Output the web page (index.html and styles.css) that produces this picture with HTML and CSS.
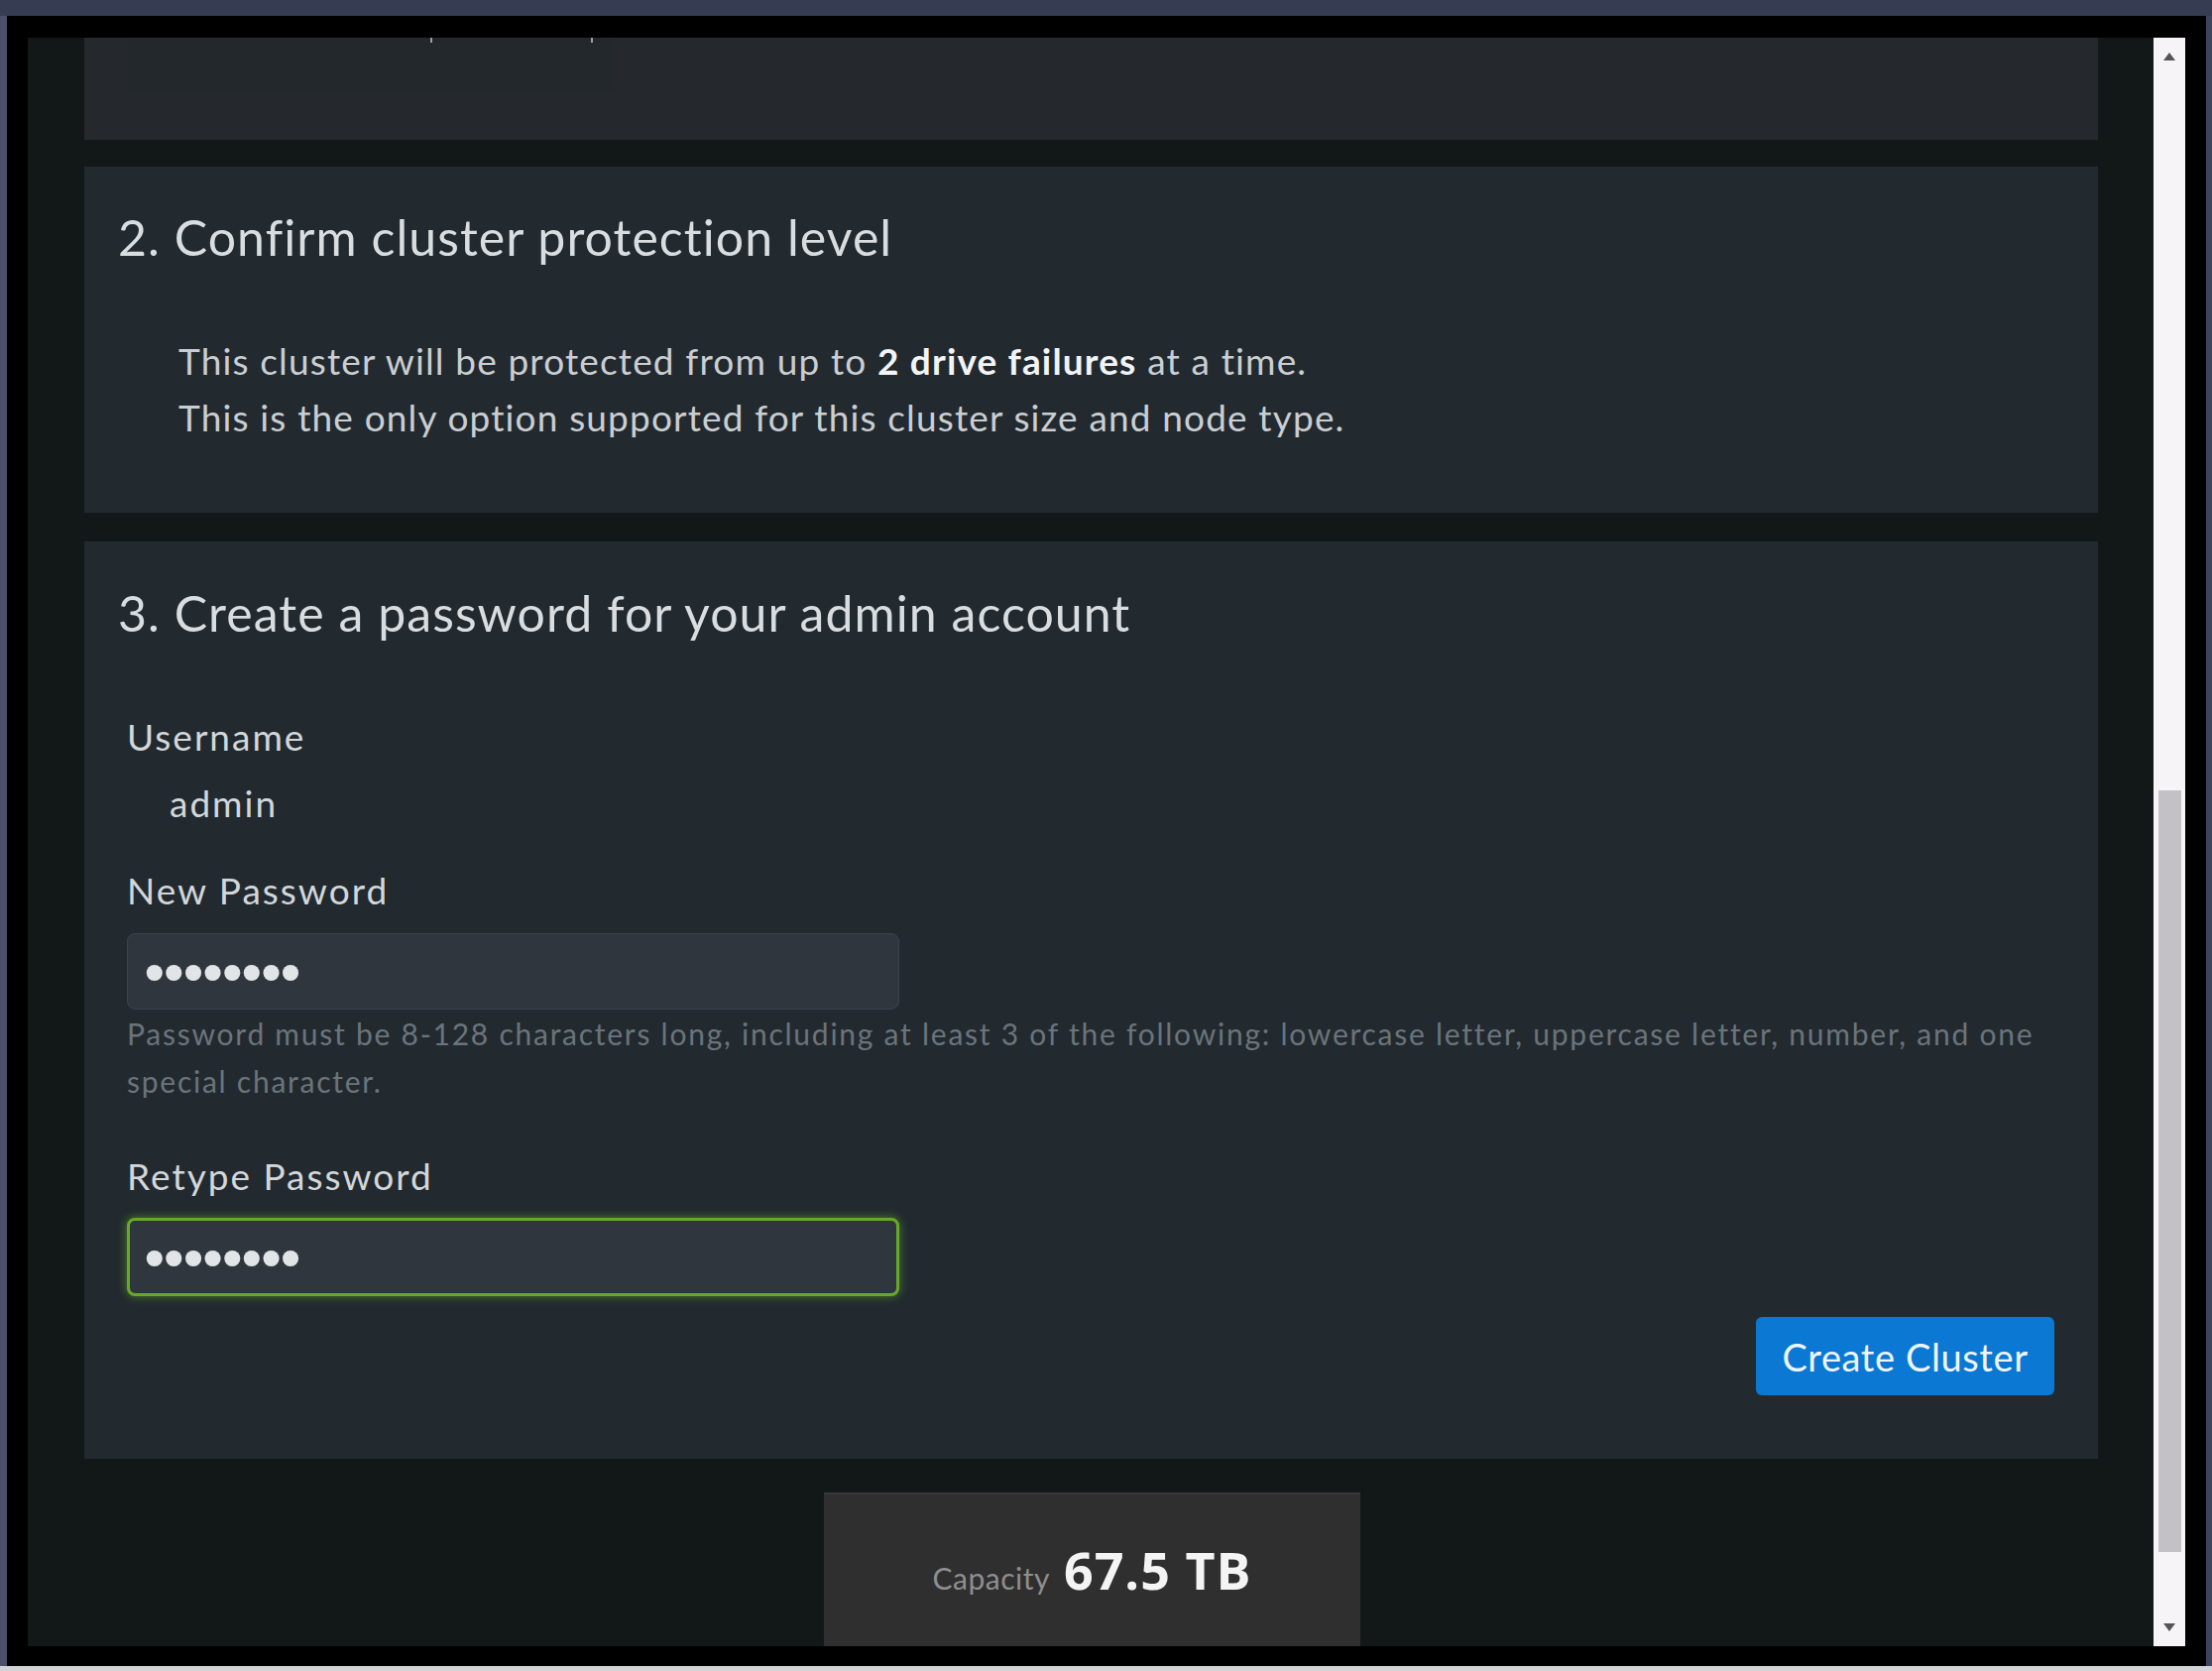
FILE: index.html
```html
<!DOCTYPE html>
<html lang="en">
<head>
<meta charset="utf-8">
<title>Create Cluster</title>
<link rel="stylesheet" href="styles.css">
</head>
<body>
<div class="screen">
  <div class="top-strip"></div>
  <div class="middle">
    <div class="side-strip left"></div>
    <div class="window">
      <div class="viewport">
        <div class="scroll-content">
          <section class="card card-partial">
            <div class="faint-field"><span class="tick t1"></span><span class="tick t2"></span></div>
          </section>
          <section class="card card-protection">
            <h2 class="card-title">2. Confirm cluster protection level</h2>
            <p class="desc">This cluster will be protected from up to <strong>2 drive failures</strong> at a time.<br>This is the only option supported for this cluster size and node type.</p>
          </section>
          <section class="card card-password">
            <h2 class="card-title">3. Create a password for your admin account</h2>
            <form class="pw-form">
              <div class="field-label first">Username</div>
              <div class="static-value">admin</div>
              <label class="field-label" for="pw1">New Password</label>
              <input class="pw-input" id="pw1" type="password" value="password">
              <div class="help">Password must be 8-128 characters long, including at least 3 of the following: lowercase letter, uppercase letter, number, and one special character.</div>
              <label class="field-label retype" for="pw2">Retype Password</label>
              <input class="pw-input valid" id="pw2" type="password" value="password">
              <div class="actions">
                <button type="button" class="btn-primary">Create Cluster</button>
              </div>
            </form>
          </section>
        </div>
        <div class="capacity">
          <span class="cap-label">Capacity</span>
          <span class="cap-value">67.5 TB</span>
        </div>
      </div>
      <div class="scrollbar">
        <div class="sb-arrow up"></div>
        <div class="sb-track"><div class="sb-thumb"></div></div>
        <div class="sb-arrow down"></div>
      </div>
    </div>
    <div class="side-strip right"></div>
  </div>
  <div class="bottom-strip"></div>
</div>
</body>
</html>
```
FILE: styles.css
```css
* { box-sizing: border-box; }
html, body { margin: 0; padding: 0; }
body {
  width: 2231px;
  height: 1685px;
  overflow: hidden;
  background: #363c52;
  font-family: Lato, "Noto Sans", sans-serif;
}
.screen {
  width: 2231px;
  height: 1685px;
  display: flex;
  flex-direction: column;
}
.top-strip { height: 16px; background: #363c52; flex: none; }
.bottom-strip { height: 5px; background: #d2d3d6; flex: none; }
.middle { display: flex; height: 1664px; flex: none; }
.side-strip { flex: none; background: #3e445b; }
.side-strip.left { width: 7px; background: #4c5269; }
.side-strip.right { width: 6px; }

.window {
  width: 2218px;
  flex: none;
  background: #000;
  padding: 22px 21px 20px 21px;
  display: flex;
}
.viewport {
  position: relative;
  width: 2144px;
  height: 1622px;
  background: #111817;
  overflow: hidden;
  flex: none;
}
.scroll-content {
  padding: 0 56px 0 57px;
  display: flex;
  flex-direction: column;
}
.card {
  background: #222a30;
  color: #d6dadd;
}
.card-partial {
  height: 103px;
  margin-bottom: 27px;
  background: #25292d;
  padding-left: 43px;
}
.faint-field {
  position: relative;
  width: 491px;
  height: 55px;
  background: #22282c;
}
.tick {
  position: absolute;
  top: 0;
  width: 2px;
  height: 5px;
  background: #9aa0a4;
}
.tick.t1 { left: 306px; }
.tick.t2 { left: 468px; }

.card-protection {
  height: 349px;
  margin-bottom: 29px;
  padding: 41px 34px 0 34px;
}
.card-title {
  margin: 0;
  font-weight: 400;
  font-size: 50px;
  line-height: 60px;
  letter-spacing: 1.05px;
  color: #d9dde0;
}
.desc {
  margin: 66px 0 0 0;
  padding-left: 61px;
  font-size: 37px;
  line-height: 57px;
  letter-spacing: 1.15px;
  color: #caced2;
}
.desc strong { color: #f2f4f5; font-weight: 700; }

.card-password {
  height: 925px;
  padding: 41.5px 44px 0 34px;
}
.pw-form {
  margin: 0 0 0 9px;
  display: flex;
  flex-direction: column;
}
.field-label {
  display: block;
  font-size: 37px;
  line-height: 42px;
  letter-spacing: 2px;
  color: #d3d7da;
  margin-top: 46px;
}
.field-label.first { margin-top: 74px; }
.field-label.retype { margin-top: 50.5px; }
.static-value {
  margin-top: 25px;
  padding-left: 43px;
  font-size: 37px;
  line-height: 42px;
  letter-spacing: 2px;
  color: #d3d7da;
}
.pw-input {
  display: block;
  width: 779px;
  height: 77px;
  margin: 22.5px 0 0 0;
  padding: 0 0 0 17px;
  background: #30363e;
  border: 1px solid #3b424a;
  border-radius: 8px;
  color: #e2e5e7;
  font-family: "Liberation Sans", sans-serif;
  font-weight: 700;
  font-size: 56px;
  letter-spacing: 0;
  outline: none;
}
.pw-input.valid {
  height: 79px;
  margin-top: 21.5px;
  padding-left: 15px;
  border: 3px solid #66a92a;
  box-shadow: 0 0 8px 1px rgba(102, 170, 40, 0.55);
}
.help {
  font-size: 30px;
  line-height: 48px;
  letter-spacing: 1.75px;
  color: #6b747a;
}
.actions {
  margin-top: 21px;
  display: flex;
  justify-content: flex-end;
}
.btn-primary {
  height: 79px;
  width: 301px;
  padding: 0;
  border: none;
  border-radius: 6px;
  background: #0b78d3;
  color: #eef6fd;
  font-family: Lato, "Noto Sans", sans-serif;
  font-size: 38px;
  letter-spacing: 0.6px;
}

.capacity {
  position: absolute;
  left: 803px;
  top: 1467px;
  width: 541px;
  height: 160px;
  background: #2f2f2f;
  border-top: 2px solid #393939;
  display: flex;
  align-items: baseline;
  justify-content: center;
  gap: 14px;
  padding-top: 40px;
}
.cap-label {
  font-size: 30px;
  letter-spacing: 0.5px;
  color: #8e8e8e;
}
.cap-value {
  font-family: "Open Sans", "Noto Sans", sans-serif;
  font-weight: 700;
  font-size: 52px;
  letter-spacing: 1px;
  color: #f4f4f4;
}

.scrollbar {
  width: 32px;
  height: 1622px;
  background: #f6f4f7;
  display: flex;
  flex-direction: column;
  flex: none;
}
.sb-arrow {
  height: 38px;
  display: flex;
  align-items: center;
  justify-content: center;
  flex: none;
}
.sb-arrow::before {
  content: "";
  width: 0;
  height: 0;
  border-left: 6px solid transparent;
  border-right: 6px solid transparent;
}
.sb-arrow.up::before { border-bottom: 8px solid #555; }
.sb-arrow.down::before { border-top: 8px solid #555; }
.sb-track {
  flex: 1;
  padding: 721px 4px 0 5px;
}
.sb-thumb {
  height: 768px;
  background: #c3c1c5;
}
```
